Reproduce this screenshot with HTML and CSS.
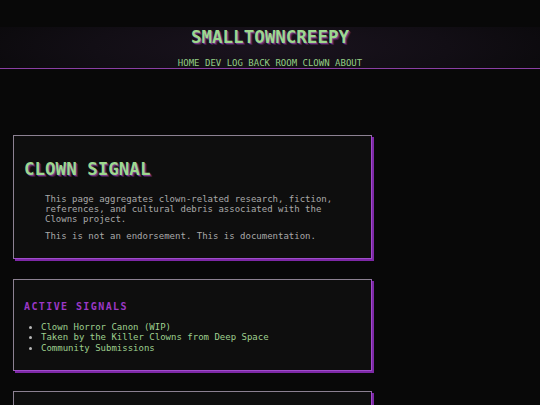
FILE: index.html
```html
<!DOCTYPE html>
<html lang="en">
<head>
<meta charset="utf-8">
<title>Clown Signal</title>
<link rel="stylesheet" href="styles.css">
</head>
<body>
<header class="site-header">
  <h1 class="site-title">SMALLTOWNCREEPY</h1>
  <nav class="site-nav">
    <a href="#">HOME</a> <a href="#">DEV LOG</a> <a href="#">BACK ROOM</a> <a href="#">CLOWN</a> <a href="#">ABOUT</a>
  </nav>
</header>
<main class="content">
  <section class="card">
    <h2 class="card-title">CLOWN SIGNAL</h2>
    <div class="intro">
      <p>This page aggregates clown-related research, fiction, references, and cultural debris associated with the Clowns project.</p>
      <p>This is not an endorsement. This is documentation.</p>
    </div>
  </section>
  <section class="card">
    <h3 class="section-title">ACTIVE SIGNALS</h3>
    <ul class="signal-list">
      <li>Clown Horror Canon (WIP)</li>
      <li>Taken by the Killer Clowns from Deep Space</li>
      <li>Community Submissions</li>
    </ul>
  </section>
  <section class="card card-short"></section>
</main>
</body>
</html>
```
FILE: styles.css
```css
html, body {
  margin: 0;
  padding: 0;
  background: #080808;
}
body {
  font-family: "DejaVu Sans Mono", "Liberation Mono", monospace;
  color: #a8a8a8;
}
.site-header {
  margin-top: 27px;
  background: radial-gradient(ellipse 60% 140% at 50% 50%, #1a131e 0%, #120e15 55%, #0a090b 100%);
  border-bottom: 1px solid #8a3fa3;
  text-align: center;
}
.site-title {
  margin: 0;
  font-size: 17.5px;
  line-height: 20px;
  font-weight: bold;
  color: #9ed88e;
  text-shadow: 1px 1px 0 #7a3a8a, 2px 2px 0 #3c1f45;
}
.site-nav {
  margin-top: 11px;
  font-size: 9px;
  line-height: 10px;
  white-space: nowrap;
}
.site-nav a {
  color: #93cd84;
  text-decoration: none;
}
.content {
  padding: 66px 0 0 13px;
  display: flex;
  flex-direction: column;
  gap: 20px;
}
.card {
  box-sizing: border-box;
  width: 359px;
  background: #0e0e0e;
  border: 1px solid #8c8192;
  border-right-color: #a04ccb;
  border-bottom-color: #a04ccb;
  box-shadow: 2px 2px 0 #7d28a6;
  padding: 10px 10px 17px;
}
.card-title {
  margin: 13px 0 0;
  font-size: 17.5px;
  line-height: 21px;
  font-weight: bold;
  color: #9ed88e;
  text-shadow: 1px 1px 0 #7a3a8a, 2px 2px 0 #3c1f45;
}
.intro {
  margin: 14px 21px 0 21px;
  font-size: 9px;
  line-height: 10px;
  color: #a9a9a9;
}
.intro p {
  margin: 0;
}
.intro p + p {
  margin-top: 7px;
}
.section-title {
  margin: 11px 0 0;
  font-size: 10px;
  line-height: 12px;
  letter-spacing: 1.4px;
  font-weight: bold;
  color: #9b38c6;
}
.signal-list {
  margin: 9px 0 0;
  padding-left: 17px;
  font-size: 9px;
  line-height: 10.35px;
  color: #9fd08e;
}
.signal-list li::marker {
  color: #b8b8b8;
}
.card-short {
  height: 60px;
}
```
